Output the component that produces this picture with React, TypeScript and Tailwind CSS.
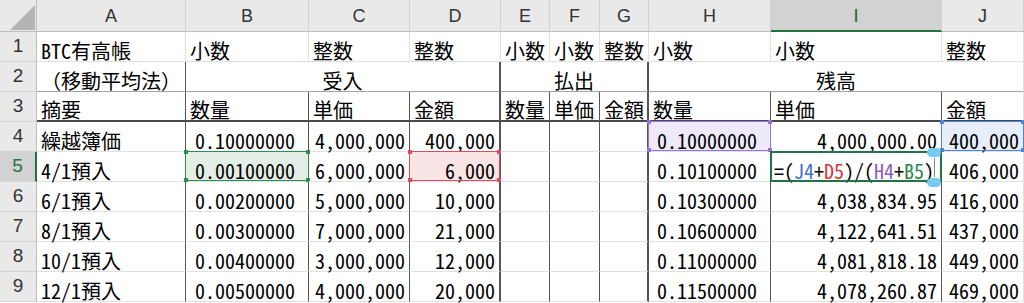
import React from "react";

const COLS = ["A", "B", "C", "D", "E", "F", "G", "H", "I", "J"];

type Hl = { fill: string; border: string; box: string; sq: string };

const HL: Record<string, Hl> = {
  green: { fill: "bg-[#e3efe6]", border: "border-[#2f8c4a]", box: "-left-[1px] -right-[1px] -top-[1px] bottom-0", sq: "bg-[#2f8c4a]" },
  red: { fill: "bg-[#f9e4e6]", border: "border-[#d64f5b]", box: "-left-[1px] -right-[1px] -top-[1px] bottom-0", sq: "bg-[#d64f5b]" },
  purple: { fill: "bg-[#efeafb]", border: "border-[#9b6fdc]", box: "-left-[1px] -right-[1px] -top-[1px] bottom-0", sq: "bg-[#9b6fdc]" },
  blue: { fill: "bg-[#e6eefb]", border: "border-[#4d82dd]", box: "-left-[1px] -right-[1px] -top-[1px] bottom-0", sq: "bg-[#4d82dd]" },
};

function RefBox({ kind }: { kind: string }) {
  const h = HL[kind];
  return (
    <div className={`pointer-events-none absolute ${h.box} border ${h.border}`}>
      <div className={`absolute -left-[2px] -top-[2px] h-[4px] w-[4px] ${h.sq}`} />
      <div className={`absolute -right-[2px] -top-[2px] h-[4px] w-[4px] ${h.sq}`} />
      <div className={`absolute -left-[2px] -bottom-[2px] h-[4px] w-[4px] ${h.sq}`} />
      <div className={`absolute -right-[2px] -bottom-[2px] h-[4px] w-[4px] ${h.sq}`} />
    </div>
  );
}

const data: string[][] = [
  ["繰越簿価", "0.10000000", "4,000,000", "400,000", "", "", "", "0.10000000", "4,000,000.00", "400,000"],
  ["4/1預入", "0.00100000", "6,000,000", "6,000", "", "", "", "0.10100000", "", "406,000"],
  ["6/1預入", "0.00200000", "5,000,000", "10,000", "", "", "", "0.10300000", "4,038,834.95", "416,000"],
  ["8/1預入", "0.00300000", "7,000,000", "21,000", "", "", "", "0.10600000", "4,122,641.51", "437,000"],
  ["10/1預入", "0.00400000", "3,000,000", "12,000", "", "", "", "0.11000000", "4,081,818.18", "449,000"],
  ["12/1預入", "0.00500000", "4,000,000", "20,000", "", "", "", "0.11500000", "4,078,260.87", "469,000"],
];

const row1 = ["BTC有高帳", "小数", "整数", "整数", "小数", "小数", "整数", "小数", "小数", "整数"];
const row3 = ["摘要", "数量", "単価", "金額", "数量", "単価", "金額", "数量", "単価", "金額"];

const cellBase = "relative flex items-end leading-[20px] whitespace-nowrap overflow-visible";

function RowHead({ n, sel }: { n: number; sel?: boolean }) {
  return (
    <div
      className={`flex items-center justify-center font-['Liberation_Sans',sans-serif] text-[19px] border-b border-[#d4d4d4] ${
        sel
          ? "bg-[#d2d2d2] text-[#217346] border-r-2 border-r-[#217346]"
          : "bg-[#e9e9e9] text-[#333] border-r border-r-[#bdbdbd]"
      }`}
    >
      {n}
    </div>
  );
}

function Formula() {
  return (
    <span>
      <span>=(</span>
      <span className="text-[#3f6fd9]">J4</span>
      <span>+</span>
      <span className="text-[#d4383f]">D5</span>
      <span>)/(</span>
      <span className="text-[#8e5cc8]">H4</span>
      <span>+</span>
      <span className="text-[#2a8a45]">B5</span>
      <span>)</span>
    </span>
  );
}

export default function App() {
  return (
    <div className="h-[303px] w-[1024px] overflow-hidden bg-white">
      <div className="grid grid-cols-[37px_149px_123px_101px_91px_49px_50px_49px_122px_171px_82px] grid-rows-[32px_repeat(9,30px)] font-['Noto_Sans_Mono_CJK_JP','Noto_Sans_CJK_JP',monospace] text-[20px] text-black">
        {/* header row */}
        <div className="relative border-b border-r border-[#bdbdbd] bg-[#e9e9e9]">
          <svg className="absolute left-0 top-0" width="37" height="32" viewBox="0 0 37 32">
            <polygon points="10,30 35,30 35,5" fill="#b4b4b4" />
          </svg>
        </div>
        {COLS.map((c) => (
          <div
            key={c}
            className={`flex items-center justify-center pt-[2px] font-['Liberation_Sans',sans-serif] text-[18px] border-r border-r-[#d0d0d0] ${
              c === "I"
                ? "bg-[#d2d2d2] text-[#1d5e36] border-b-2 border-b-[#217346]"
                : "bg-[#e9e9e9] text-[#333] border-b border-b-[#bdbdbd]"
            }`}
          >
            {c}
          </div>
        ))}

        {/* row 1 */}
        <RowHead n={1} />
        {row1.map((t, i) => (
          <div key={i} className={`${cellBase} pl-[4px] border-b border-r border-[#e1e1e1]`}>
            {t}
          </div>
        ))}

        {/* row 2 */}
        <RowHead n={2} />
        <div className={`${cellBase} pl-[4px] border-b border-b-[#a3a3a3] border-r border-r-[#555]`}>（移動平均法）</div>
        <div className={`${cellBase} col-span-3 justify-center border-b border-b-[#a3a3a3] border-r-2 border-r-[#555]`}>受入</div>
        <div className={`${cellBase} col-span-3 justify-center border-b border-b-[#a3a3a3] border-r-2 border-r-[#555]`}>払出</div>
        <div className={`${cellBase} col-span-3 justify-center border-b border-b-[#a3a3a3] border-r border-r-[#e1e1e1]`}>残高</div>

        {/* row 3 */}
        <RowHead n={3} />
        {row3.map((t, i) => (
          <div
            key={i}
            className={`${cellBase} pl-[4px] border-b-2 border-b-[#4a4a4a] ${
              i === 9 ? "border-r border-r-[#e1e1e1]" : i === 3 || i === 6 ? "border-r-2 border-r-[#555]" : "border-r border-r-[#555]"
            }`}
          >
            {t}
          </div>
        ))}

        {/* data rows */}
        {data.map((r, ri) => {
          const rowNum = ri + 4;
          return (
            <React.Fragment key={ri}>
              <RowHead n={rowNum} sel={rowNum === 5} />
              {r.map((t, ci) => {
                const rightCls =
                  ci === 9
                    ? "border-r border-r-[#e1e1e1]"
                    : ci === 3 || ci === 6
                    ? "border-r-2 border-r-[#555]"
                    : "border-r border-r-[#555]";
                const align =
                  ci === 0
                    ? "pl-[4px]"
                    : ci === 1 || ci === 7
                    ? "justify-end pr-[13px]"
                    : ci === 8 && rowNum === 5
                    ? "pl-[3px]"
                    : "justify-end pr-[4px]";
                let hl: string | null = null;
                if (rowNum === 5 && ci === 1) hl = "green";
                if (rowNum === 5 && ci === 3) hl = "red";
                if (rowNum === 4 && ci === 7) hl = "purple";
                if (rowNum === 4 && ci === 9) hl = "blue";
                const fill = hl ? HL[hl].fill : "";
                const active = rowNum === 5 && ci === 8;
                return (
                  <div key={ci} className={`${cellBase} ${align} ${fill} border-b border-b-[#e1e1e1] ${rightCls}`}>
                    {active ? <Formula /> : <span className="relative">{t}</span>}
                    {hl && <RefBox kind={hl} />}
                    {active && (
                      <>
                        <div className="pointer-events-none absolute -left-[1px] -right-[1px] -top-[1px] -bottom-[1px] border-2 border-[#217346]" />
                        <div className="absolute right-[6px] top-[6px] h-[19px] w-[1px] bg-[#8a8a8a]" />
                        <div className="absolute -top-[4px] right-[0px] h-[9px] w-[14px] rounded-full bg-[#76c9f0]" />
                        <div className="absolute -bottom-[6px] right-[0px] h-[9px] w-[14px] rounded-full bg-[#76c9f0]" />
                      </>
                    )}
                  </div>
                );
              })}
            </React.Fragment>
          );
        })}
      </div>
    </div>
  );
}
